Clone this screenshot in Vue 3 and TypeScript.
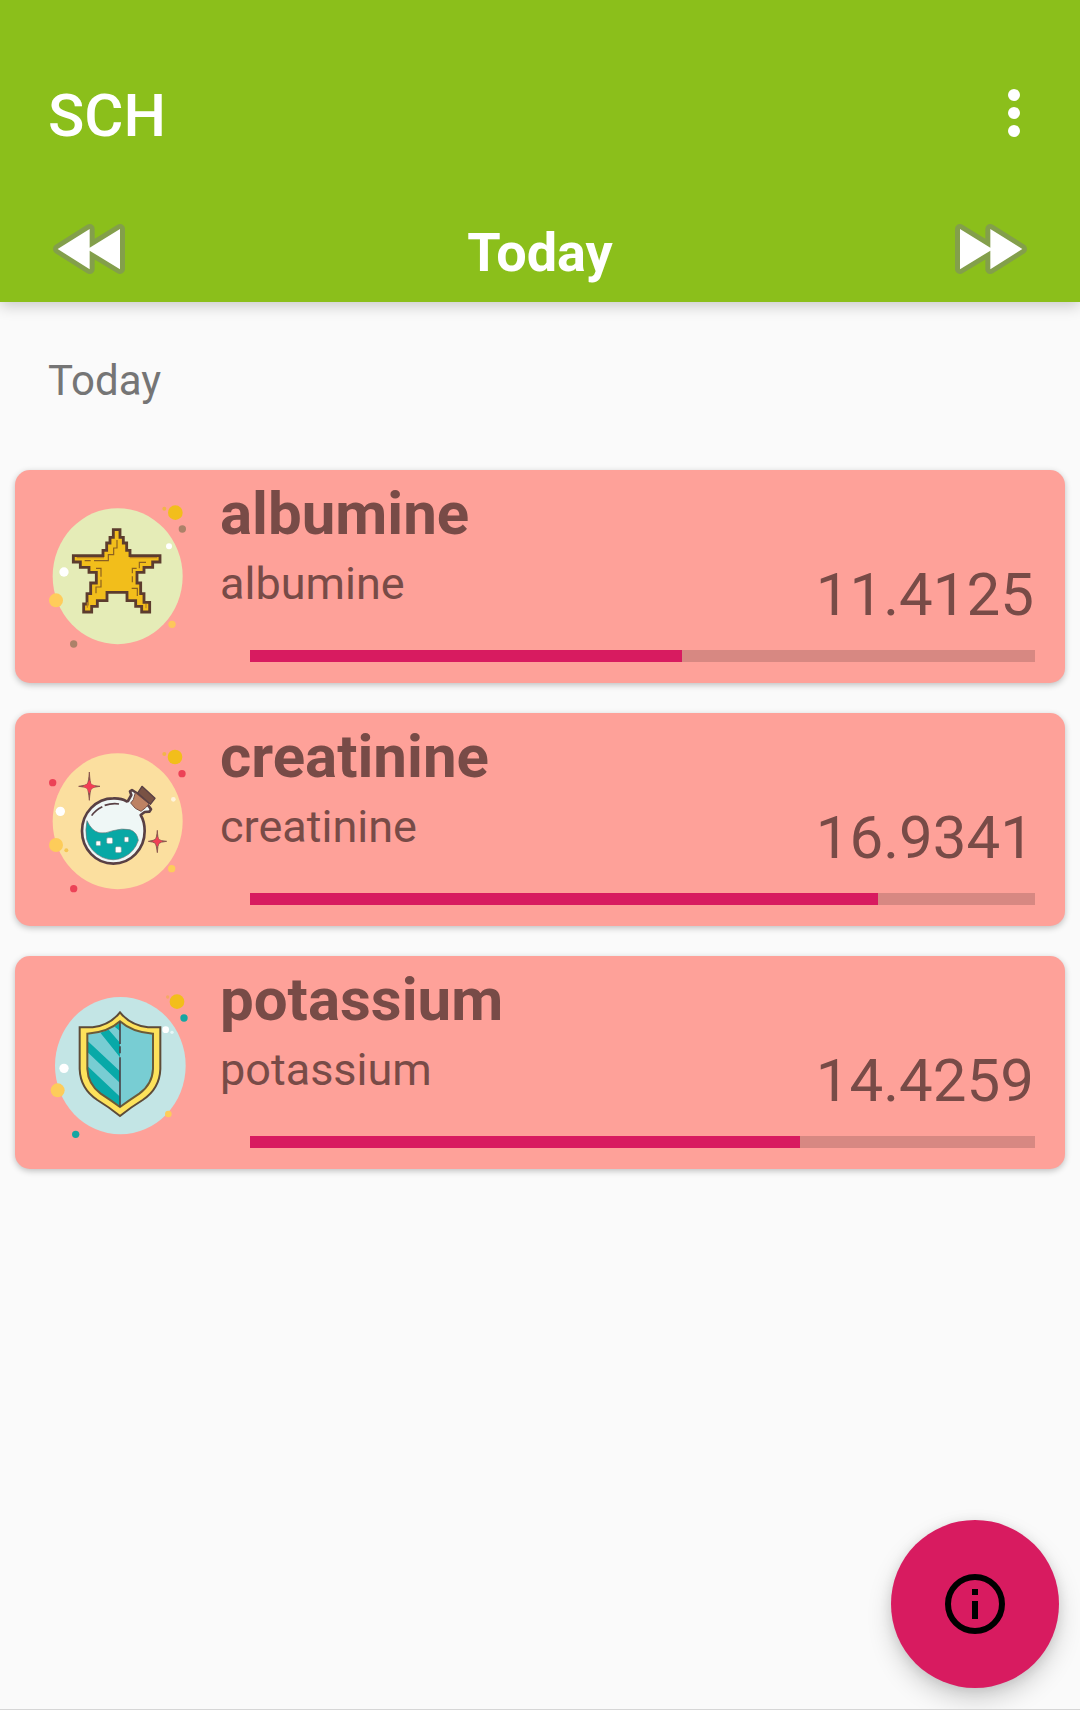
<script setup lang="ts">
interface Measurement {
  name: string
  value: string
  percent: number
  icon: 'star' | 'flask' | 'shield'
}

const measurements: Measurement[] = [
  { name: 'albumine', value: '11.4125', percent: 55, icon: 'star' },
  { name: 'creatinine', value: '16.9341', percent: 80, icon: 'flask' },
  { name: 'potassium', value: '14.4259', percent: 70, icon: 'shield' },
]
</script>

<template>
  <div class="screen">
    <header class="app-bar">
      <div class="toolbar">
        <h1 class="title">SCH</h1>
        <svg class="more" viewBox="0 0 12 48" aria-label="More options">
          <circle cx="6" cy="6" r="6" /><circle cx="6" cy="24" r="6" /><circle cx="6" cy="42" r="6" />
        </svg>
      </div>
      <div class="day-nav">
        <svg class="arrow" viewBox="0 0 216 150" aria-label="Previous day">
          <path class="halo" d="M110 15 15 75 110 135V80L201 135V15L110 71Z" />
          <path class="tri" d="M110 15 14 75 110 136V80L201 136V15L110 71Z" />
        </svg>
        <h2 class="day">Today</h2>
        <svg class="arrow" viewBox="0 0 216 150" aria-label="Next day">
          <path class="halo" d="M106 15 201 75 106 135V80L15 135V15L106 71Z" />
          <path class="tri" d="M106 15 202 75 106 136V80L15 136V15L106 71Z" />
        </svg>
      </div>
    </header>

    <main class="content">
      <p class="section">Today</p>
      <div class="list">
        <article v-for="m in measurements" :key="m.name" class="card">
          <svg v-if="m.icon === 'star'" class="icon" viewBox="0 0 480 510">
            <ellipse cx="233" cy="258.500" rx="195" ry="204" fill="#e5ecb7" />
            <circle cx="406" cy="68" r="22" fill="#f2be1b" />
            <circle cx="373" cy="56" r="6" fill="#f2b44b" />
            <circle cx="427" cy="117" r="11" fill="#ac8169" />
            <circle cx="387" cy="169" r="9" fill="#fff" />
            <circle cx="72" cy="246" r="14" fill="#fff" />
            <circle cx="48" cy="331" r="21" fill="#ffcc5b" />
            <circle cx="396" cy="403" r="11" fill="#fdc75b" />
            <circle cx="101" cy="462" r="11" fill="#ac8169" />
            <path
              d="M220 119H240V142H250V159H260V181H270V197H360V216H338V232H312V247H291V279H302V311H312V337H329V366H305V349H287V332H261V307H201V332H172V349H155V366H131V342H141V311H152V279H169V247H147V232H121V216H100V197H189V181H200V159H210V142H220Z"
              fill="#f2be1b" stroke="#5c3c2e" stroke-width="8.500"
            />
            <g fill="none" stroke="#8b6020" stroke-width="3.500">
              <path d="M231 150V174H221V194H205V212H162M152 212H134M168 235H183V260M183 269V291H168V310M318 217H298V235M290 235H277V250M277 259V277M275 295H292V318" />
              <path d="M110 203H192M269 203H352M142 353V337M318 355V342" stroke="#bd8520" />
            </g>
          </svg>

          <svg v-else-if="m.icon === 'flask'" class="icon" viewBox="0 -6 480 510">
            <ellipse cx="233" cy="258.500" rx="195" ry="204" fill="#fbdf9f" />
            <circle cx="405" cy="66" r="22" fill="#f2be1b" />
            <circle cx="373" cy="57" r="6" fill="#f2b44b" />
            <circle cx="426" cy="116" r="11" fill="#ec4257" />
            <circle cx="38" cy="143" r="11" fill="#ec4257" />
            <circle cx="101" cy="461" r="11" fill="#ec4257" />
            <circle cx="400" cy="193" r="7" fill="#fff4dc" />
            <circle cx="61" cy="229" r="14" fill="#fff" />
            <circle cx="48" cy="330" r="21" fill="#fdcc5a" />
            <circle cx="79" cy="346" r="6" fill="#f5c653" />
            <circle cx="395" cy="401" r="11" fill="#fdcc5a" />
            <path d="M148 111Q150 144 154 149Q160 152 180 154Q158 156 154 161Q150 168 148 196Q145 165 142 160Q137 156 116 154Q138 151 142 147Q146 140 148 111Z" fill="#85504a" stroke="#85504a" stroke-width="2.500" />
            <path d="M148 134 154 148 168 154 154 161 148 176 142 161 128 154 142 147Z" fill="#f23f55" />
            <path d="M352 286Q353 310 357 314Q361 317 380 319Q361 321 357 325Q353 330 352 353Q349 330 346 325Q341 321 325 319Q343 316 346 313Q350 309 352 286Z" fill="#85504a" stroke="#85504a" stroke-width="2.500" />
            <path d="M352 304 357 314 368 319 357 324 352 336 346 324 336 319 346 314Z" fill="#f23f55" />
            <path d="M264 198 274 180 270 169 276 165 290 174 326 213 333 223 328 230 314 231 302 240Q314 260 314 288A94 98 0 1 1 220 190Q244 189 260 199Z" fill="#eff7f6" stroke="#594044" stroke-width="8" stroke-linejoin="round" />
            <path d="M141 257Q155 288 177 293Q196 297 219 287Q246 279 270 284Q291 291 295 316Q283 352 252 366Q221 382 187 367Q151 350 140 313Q135 284 141 257Z" fill="#08a8a5" stroke="#6b7778" stroke-width="2" />
            <path d="M155 242Q166 225 187 215M194 211Q216 204 237 207" fill="none" stroke="#594044" stroke-width="5" />
            <path d="M286 173 327 206 317 218 303 229 286 220 272 204 280 194Z" fill="#bd8263" stroke="#765047" stroke-width="3" />
            <path d="M306 154 345 190 331 208 293 174Z" fill="#795244" stroke="#594044" stroke-width="4" stroke-linejoin="round" />
            <g fill="#fff" stroke="#6f9999" stroke-width="2">
              <rect x="168" y="318" width="14" height="14" rx="3" /><rect x="200" y="308" width="18" height="18" rx="4" />
              <rect x="253" y="306" width="13" height="15" rx="3" /><rect x="226" y="335" width="18" height="18" rx="4" />
            </g>
          </svg>

          <svg v-else class="icon" viewBox="0 -12 480 510">
            <ellipse cx="241" cy="257" rx="196" ry="206" fill="#c3e5e5" />
            <circle cx="411" cy="65" r="22" fill="#f2be1b" />
            <circle cx="383" cy="51" r="5" fill="#f5a965" />
            <circle cx="432" cy="114" r="11" fill="#16a6a2" />
            <circle cx="107" cy="463" r="11" fill="#16a6a2" />
            <circle cx="377" cy="149" r="10" fill="#fff" />
            <circle cx="396" cy="157" r="5" fill="#e7f7f7" />
            <circle cx="72" cy="265" r="14" fill="#fff" />
            <circle cx="53" cy="331" r="21" fill="#fdcc5a" />
            <circle cx="385" cy="402" r="10" fill="#fdcc5a" />
            <path d="M240 97Q271 136 324 142H361V267Q359 326 308 360Q272 382 240 408Q208 382 172 360Q121 326 119 267V142H158Q209 136 240 97Z" fill="#fde25b" stroke="#5d4b38" stroke-width="6" />
            <path d="M240 124Q278 158 339 161V267Q337 313 298 341Q266 362 240 381Q214 362 182 341Q144 313 142 267V161Q203 158 240 124Z" fill="#78cdd3" />
            <path d="M181 158 206 149 240 188V232Z M143 183 240 274V309L143 217Z M143 259 240 350V378L182 341Q143 313 143 259ZM224 140 240 126V153Z" fill="#08a9a8" />
            <path d="M240 124Q278 158 339 161V267Q337 313 298 341Q266 362 240 381Q214 362 182 341Q144 313 142 267V161Q203 158 240 124Z" fill="none" stroke="#6b5a38" stroke-width="6" />
            <path d="M240 125V192M240 199V220M240 232V381" stroke="#4b4649" stroke-width="5" />
          </svg>

          <div class="info">
            <h3 class="name">{{ m.name }}</h3>
            <div class="row">
              <span class="sub">{{ m.name }}</span>
              <span class="value">{{ m.value }}</span>
            </div>
            <div class="track"><div class="fill" :style="{ width: m.percent + '%' }"></div></div>
          </div>
        </article>
      </div>
    </main>

    <button class="fab" aria-label="Information">
      <svg viewBox="0 0 20 20">
        <circle cx="10" cy="10" r="9" fill="none" stroke="#000" stroke-width="2" />
        <path d="M9 5h2v2H9zM9 9h2v6H9z" />
      </svg>
    </button>
  </div>
</template>

<style>
body {
  margin: 0;
  background: #fafafa;
}
</style>

<style scoped>
.screen {
  position: relative;
  box-sizing: border-box;
  width: 1080px;
  height: 1710px;
  overflow: hidden;
  background: #fafafa;
  border-bottom: 1px solid #d6d6d6;
  font-family: Roboto, "Liberation Sans", sans-serif;
}
h1, h2, h3, p {
  margin: 0;
}
.app-bar {
  box-sizing: border-box;
  height: 302px;
  padding-top: 80px;
  background: #8bbf1b;
  box-shadow: 0 4px 14px rgba(0, 0, 0, 0.2);
}
.toolbar {
  display: flex;
  justify-content: space-between;
  height: 136px;
  padding: 0 60px 0 48px;
}
.title {
  margin-top: 1px;
  color: #fff;
  font-size: 60px;
  font-weight: 500;
  line-height: 70px;
}
.more {
  width: 12px;
  height: 48px;
  margin-top: 9px;
  fill: #fff;
}
.day-nav {
  display: flex;
  justify-content: space-between;
  padding: 0 53px;
}
.arrow {
  width: 72px;
  height: 50px;
  margin-top: 8px;
}
.halo {
  fill: #839f4b;
  stroke: #839f4b;
  stroke-width: 30px;
  stroke-linejoin: round;
}
.tri {
  fill: #fff;
}
.day {
  margin-top: 5px;
  color: #fff;
  font-size: 54px;
  font-weight: 700;
  line-height: 63px;
}
.section {
  padding: 54px 48px 0;
  height: 114px;
  color: #757575;
  font-size: 42px;
  line-height: 50px;
}
.list {
  display: flex;
  flex-direction: column;
  gap: 30px;
  padding: 0 15px;
}
.card {
  display: flex;
  box-sizing: border-box;
  height: 213px;
  padding: 9px 30px 0 25px;
  border-radius: 15px;
  background: #fea199;
  box-shadow: 0 2px 6px rgba(0, 0, 0, 0.24);
}
.icon {
  flex: none;
  width: 160px;
  height: 170px;
  margin-top: 11px;
}
.info {
  flex: 1;
  margin-left: 20px;
  color: #784b47;
}
.name {
  font-size: 60px;
  font-weight: 700;
  line-height: 70px;
}
.row {
  display: flex;
  justify-content: space-between;
  padding-top: 8px;
  height: 93px;
}
.sub {
  font-size: 45px;
  line-height: 53px;
}
.value {
  margin: 3px 1px 0 0;
  font-size: 60px;
  line-height: 70px;
}
.track {
  height: 12px;
  margin-left: 30px;
  background: #d78882;
}
.fill {
  height: 100%;
  background: #d81b60;
}
.fab {
  position: absolute;
  left: 891px;
  top: 1520px;
  display: flex;
  align-items: center;
  justify-content: center;
  width: 168px;
  height: 168px;
  padding: 0;
  border: 0;
  border-radius: 50%;
  background: #d81b60;
  box-shadow: 0 12px 24px rgba(0, 0, 0, 0.17), 0 2px 12px rgba(0, 0, 0, 0.1);
}
.fab svg {
  width: 60px;
  height: 60px;
}
</style>
